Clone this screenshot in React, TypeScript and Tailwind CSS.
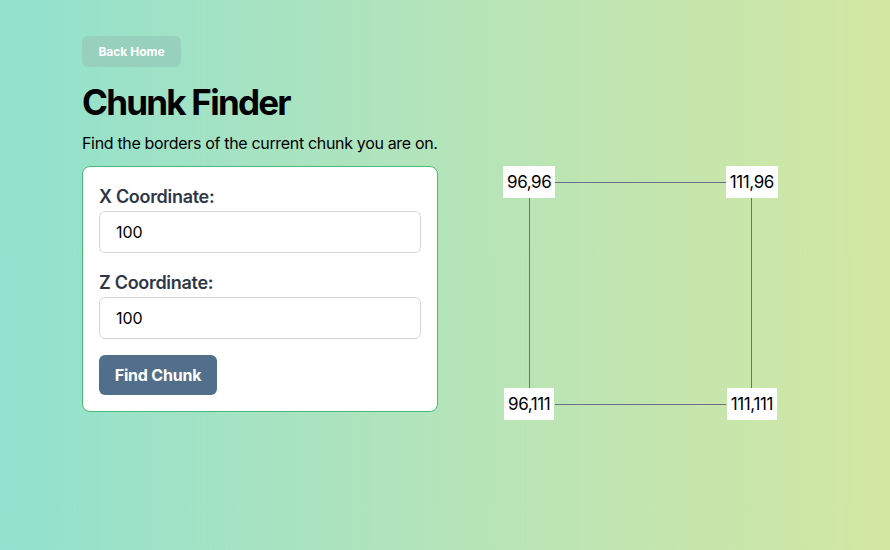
import { useState } from 'react';

const font = { fontFamily: 'Inter, "Noto Sans", sans-serif' };

function chunkOf(n: number) {
  const start = Math.floor(n / 16) * 16;
  return [start, start + 15];
}

const Corner = ({ text }: { text: string }) => (
  <div className="bg-white px-1 py-1 text-[17px] leading-6 tracking-[-0.4px] text-black">{text}</div>
);

const App = () => {
  const [x, setX] = useState('100');
  const [z, setZ] = useState('100');
  const [res, setRes] = useState({ x: chunkOf(100), z: chunkOf(100) });

  const find = () => {
    setRes({ x: chunkOf(parseInt(x) || 0), z: chunkOf(parseInt(z) || 0) });
  };

  return (
    <div
      className="min-h-[550px] w-full bg-linear-to-r from-[#91e1ce] via-[#b4e4b9] to-[#d3e7a2] pl-[82px] pt-9"
      style={font}
    >
      <button className="h-[31px] w-[99px] rounded-md bg-[#97d0bc] text-xs font-bold text-white">
        Back Home
      </button>
      <h1 className="mt-[15px] text-[35px] leading-10 font-bold tracking-tighter text-black">Chunk Finder</h1>
      <p className="mt-[9px] text-base tracking-[-0.33px] text-black">
        Find the borders of the current chunk you are on.
      </p>

      <div className="mt-[11px] flex items-start">
        {/* Form card */}
        <div className="w-[356px] rounded-lg border border-[#48bb78] bg-white p-4">
          <label className="block text-lg font-semibold tracking-[-0.3px] text-[#2d3748]">X Coordinate:</label>
          <input
            value={x}
            onChange={e => setX(e.target.value)}
            className="block h-[42px] w-full rounded-md border border-[#d4d6dc] px-4 text-base text-black outline-none"
          />
          <label className="mt-4 block text-lg font-semibold tracking-[-0.3px] text-[#2d3748]">Z Coordinate:</label>
          <input
            value={z}
            onChange={e => setZ(e.target.value)}
            className="block h-[42px] w-full rounded-md border border-[#d4d6dc] px-4 text-base text-black outline-none"
          />
          <button
            onClick={find}
            className="mt-4 h-10 w-[118px] rounded-md bg-[#516e8a] text-base font-bold tracking-[-0.2px] text-white"
          >
            Find Chunk
          </button>
        </div>

        {/* Chunk diagram */}
        <div className="ml-[65px] grid w-[275px] grid-cols-[auto_1fr_auto] justify-items-center">
          <Corner text={`${res.x[0]},${res.z[0]}`} />
          <div className="h-px w-full self-center bg-[#6f6d8c]" />
          <Corner text={`${res.x[1]},${res.z[0]}`} />

          <div className="h-[190px] w-px bg-[#6f6d8c]" />
          <div />
          <div className="h-[190px] w-px bg-[#6f6d8c]" />

          <Corner text={`${res.x[0]},${res.z[1]}`} />
          <div className="h-px w-full self-center bg-[#6f6d8c]" />
          <Corner text={`${res.x[1]},${res.z[1]}`} />
        </div>
      </div>
    </div>
  );
};

export default App;
